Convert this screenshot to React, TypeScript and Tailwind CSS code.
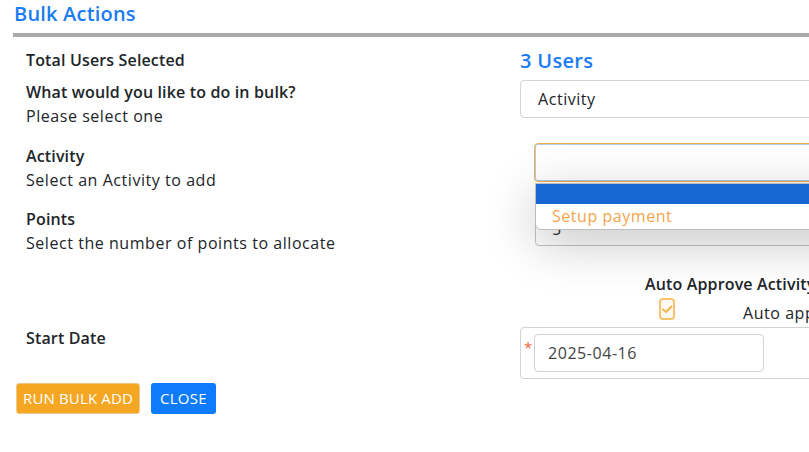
import React from "react";

export default function App() {
  return (
    <div className="w-[809px] h-[452px] bg-white overflow-hidden relative text-[#212529]" style={{ fontFamily: '"Open Sans", "Liberation Sans", sans-serif' }}>
      <div className="pl-[14px] h-[33px] pt-[1px] text-[20px] font-semibold text-[#1a7cf2] leading-[26px] tracking-[0.2px]">Bulk Actions</div>
      <div className="ml-[13px] h-[4px] bg-[#a9a9a9]" />

      <div className="flex">
        {/* left column */}
        <div className="w-[520px] pl-[26px] shrink-0 leading-[24px]">
          <div className="mt-[11px] font-semibold text-[16px] tracking-[0.15px]">Total Users Selected</div>
          <div className="mt-[8px] font-semibold text-[16px] tracking-[0.15px]">What would you like to do in bulk?</div>
          <div className="text-[16px] tracking-[0.55px]">Please select one</div>
          <div className="mt-[16px] font-semibold text-[16px] tracking-[0.15px]">Activity</div>
          <div className="text-[16px] tracking-[0.55px]">Select an Activity to add</div>
          <div className="mt-[15px] font-semibold text-[16px] tracking-[0.15px]">Points</div>
          <div className="text-[16px] tracking-[0.55px]">Select the number of points to allocate</div>
          <div className="mt-[71px] font-semibold text-[16px] tracking-[0.15px]">Start Date</div>
        </div>

        {/* right column */}
        <div className="flex-1 min-w-0 relative text-[16px] tracking-[0.55px]">
          <div className="mt-[11px] h-[26px] text-[20px] font-semibold text-[#1a7cf2] leading-[26px] tracking-[0.3px]">3 Users</div>
          <div className="mt-[6px] h-[38px] w-[400px] border border-[#ced4da] rounded-[4px] flex items-center pl-[17px]">Activity</div>

          <div className="ml-[14px] mt-[25px] h-[39px] w-[400px] border-[1.5px] border-[#f2ac45] rounded-[4px] bg-white shadow-[inset_0_0_0_1px_rgba(130,170,230,0.6)]" />
          <div className="ml-[15px] mt-[18px] h-[46px] w-[400px] border border-[#c4c4c4] rounded-[4px] bg-white flex items-end pb-[6px] pl-[16px] leading-[20px]">5</div>

          {/* dropdown overlay */}
          <div className="absolute left-[15px] top-[146px] w-[400px] h-[47px] bg-white border border-[#bdbdbd] rounded-b-[6px] shadow-[0_12px_50px_rgba(0,0,0,0.24)] overflow-hidden">
            <div className="h-[20px] bg-[#1967d2]" />
            <div className="h-[24px] pl-[16px] flex items-center text-[#f5a54a]">Setup payment</div>
          </div>

          <div className="mt-[27px] ml-[125px] font-semibold text-[16px] tracking-[0.15px] leading-[22px] whitespace-nowrap">Auto Approve Activity</div>
          <div className="flex items-start ml-[139px]">
            <div className="mt-[3px] w-[21px] h-[22px] rounded-[4px] border-2 border-[#f7c26e] bg-[#fffaf2] flex items-center justify-center">
              <svg width="12" height="10" viewBox="0 0 12 10" fill="none">
                <path d="M2 5.5 L5 8 L10.5 2.5" stroke="#f3b24e" strokeWidth="2" strokeLinecap="round" strokeLinejoin="round" />
              </svg>
            </div>
            <div className="ml-[68px] mt-[7px] whitespace-nowrap leading-[22px]">Auto approve activities</div>
          </div>

          <div className="mt-[3px] w-[400px] h-[52px] border border-[#ced4da] rounded-[4px] flex items-start pt-[6px] pl-[3px]">
            <span className="text-[#f0643c] text-[15px] leading-[20px] mt-[3px] w-[10px]">*</span>
            <div className="h-[38px] w-[230px] border border-[#ced4da] rounded-[4px] flex items-center pl-[13px] text-[#444]">2025-04-16</div>
          </div>
        </div>
      </div>

      <div className="flex gap-[11px] pl-[16px] mt-[4px]">
        <button className="h-[31px] px-[6px] bg-[#f5a623] text-white text-[15px] tracking-[0.15px] rounded-[3px] border border-[#f0c88a]">RUN BULK ADD</button>
        <button className="h-[31px] px-[9px] bg-[#0d7bfb] text-white text-[15px] tracking-[0.3px] rounded-[3px]">CLOSE</button>
      </div>
    </div>
  );
}
